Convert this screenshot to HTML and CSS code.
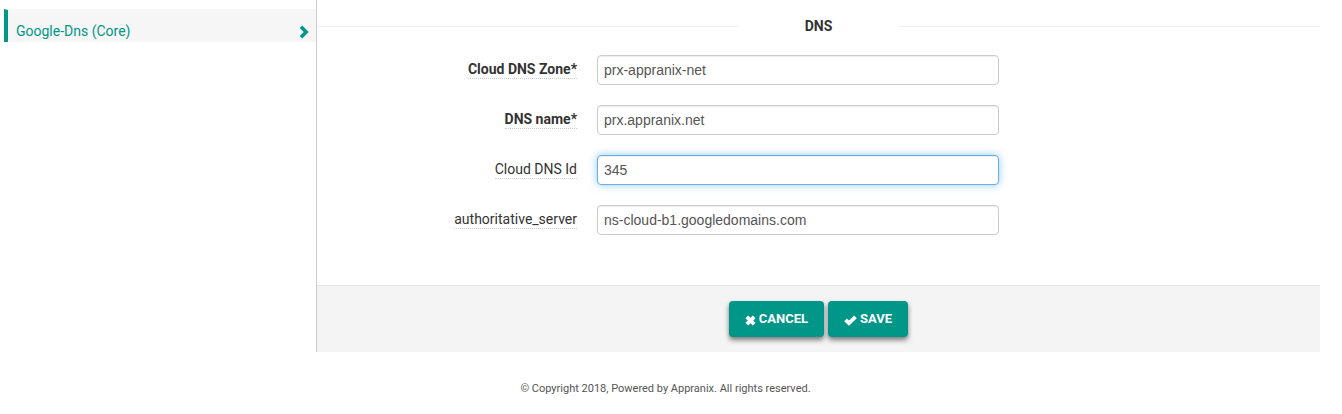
FILE: index.html
```html
<!DOCTYPE html>
<html lang="en">
<head>
<meta charset="utf-8">
<title>DNS settings</title>
<link rel="stylesheet" href="styles.css">
</head>
<body>
<div class="layout">
  <nav class="sidebar">
    <a class="nav-item"><span>Google-Dns (Core)</span>
      <svg class="chevron" width="10" height="14" viewBox="0 0 10 14"><path d="M3.2.5 9.7 7 3.2 13.5.7 11 4.7 7 .7 3Z" fill="currentColor"/></svg>
    </a>
  </nav>
  <main class="content">
    <h2 class="section-title"><span>DNS</span></h2>
    <form class="fields">
      <div class="row"><label class="label required"><span>Cloud DNS Zone*</span></label><input class="input" type="text" value="prx-appranix-net"></div>
      <div class="row"><label class="label required"><span>DNS name*</span></label><input class="input" type="text" value="prx.appranix.net"></div>
      <div class="row"><label class="label"><span>Cloud DNS Id</span></label><input class="input active" type="text" value="345"></div>
      <div class="row"><label class="label"><span>authoritative_server</span></label><input class="input" type="text" value="ns-cloud-b1.googledomains.com"></div>
    </form>
    <div class="actions">
      <button class="btn cancel" type="button"><svg width="11" height="11" viewBox="0 0 11 11"><path d="M1.8 1.8 9.2 9.2M9.2 1.8 1.8 9.2" fill="none" stroke="currentColor" stroke-width="4"/></svg><span>CANCEL</span></button>
      <button class="btn save" type="button"><svg width="13" height="11" viewBox="0 0 13 11"><path d="M1.5 4.8 5 8.2 11.5 1.8" fill="none" stroke="currentColor" stroke-width="3.8"/></svg><span>SAVE</span></button>
    </div>
  </main>
</div>
<footer class="footer">© Copyright 2018, Powered by Appranix. All rights reserved.</footer>
</body>
</html>
```
FILE: styles.css
```css
* { box-sizing: border-box; }
body {
  margin: 0;
  background: #fff;
  color: #333;
  font: 14px/20px Roboto, sans-serif;
  overflow: hidden;
}
.layout { display: flex; width: 1320px; height: 352px; }
.sidebar { width: 316px; padding: 9px 0 0 4px; }
.nav-item {
  display: flex;
  justify-content: space-between;
  height: 33px;
  padding: 11px 7px 0 8px;
  border-top: 1px solid #f6f6f6;
  border-left: 4px solid #009688;
  background: #f6f6f6;
  color: #009688;
}
.chevron { margin-top: 4px; }
.content {
  display: flex;
  flex-direction: column;
  width: 1004px;
  border-left: 1px solid #ccc;
}
.section-title {
  display: flex;
  align-items: center;
  height: 20px;
  margin: 16px 0 19px;
  font-size: 14px;
  font-weight: 700;
}
.section-title::before,
.section-title::after { content: ""; flex: 1; height: 1px; background: #eee; }
.section-title span { width: 160px; text-align: center; }
.fields { display: flex; flex-direction: column; gap: 20px; flex: 1; }
.row { display: flex; gap: 20px; height: 30px; }
.label { width: 260px; padding-top: 4px; text-align: right; }
.label span { display: inline-block; height: 19px; line-height: 18px; border-bottom: 1px dotted #ccc; }
.required { font-weight: 700; }
.input {
  width: 402px;
  height: 30px;
  padding: 4px 6px;
  border: 1px solid #ccc;
  border-radius: 4px;
  background: #fff;
  box-shadow: inset 0 1px 1px rgba(0, 0, 0, .075);
  color: #555;
  font: 14px/20px "Liberation Sans", Arial, sans-serif;
  outline: 0;
}
.active {
  border-color: #66afe9;
  box-shadow: inset 0 1px 1px rgba(0, 0, 0, .075), 0 0 8px rgba(82, 168, 236, .6);
}
.actions {
  display: flex;
  justify-content: center;
  gap: 4px;
  height: 67px;
  padding-top: 15px;
  border-top: 1px solid #e2e2e2;
  background: #f4f4f4;
}
.btn {
  display: flex;
  align-items: center;
  justify-content: center;
  gap: 3px;
  height: 36px;
  padding: 0;
  border: 0;
  border-radius: 4px;
  background: #009688;
  box-shadow: 0 3px 5px rgba(0, 0, 0, .5);
  color: #fff;
  font: 700 13px/20px Roboto, sans-serif;
}
.btn svg { margin-top: 2px; }
.cancel { width: 95px; }
.save { width: 80px; }
.footer {
  width: 1331px;
  padding-top: 27px;
  color: #555;
  font-size: 11px;
  text-align: center;
}
```
